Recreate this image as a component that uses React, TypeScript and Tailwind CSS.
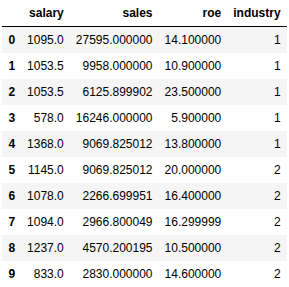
import React from 'react';

const columns = ['salary', 'sales', 'roe', 'industry'];

const rows: [string, string, string, string][] = [
  ['1095.0', '27595.000000', '14.100000', '1'],
  ['1053.5', '9958.000000', '10.900000', '1'],
  ['1053.5', '6125.899902', '23.500000', '1'],
  ['578.0', '16246.000000', '5.900000', '1'],
  ['1368.0', '9069.825012', '13.800000', '1'],
  ['1145.0', '9069.825012', '20.000000', '2'],
  ['1078.0', '2266.699951', '16.400000', '2'],
  ['1094.0', '2966.800049', '16.299999', '2'],
  ['1237.0', '4570.200195', '10.500000', '2'],
  ['833.0', '2830.000000', '14.600000', '2'],
];

export default function App() {
  return (
    <div className="min-h-screen w-full bg-white font-['Liberation_Sans',Arial,sans-serif] text-black">
      {/* DataFrame output */}
      <table className="mx-auto border-collapse text-[12px] leading-[14px]">
        <thead className="border-b border-black">
          <tr>
            <th className="px-[6px] py-[6px] text-right font-bold"></th>
            {columns.map((c) => (
              <th key={c} className="px-[6px] py-[6px] text-right font-bold whitespace-nowrap">
                {c}
              </th>
            ))}
          </tr>
        </thead>
        <tbody>
          {rows.map((r, i) => (
            <tr key={i} className="odd:bg-[#f5f5f5]">
              <th className="px-[6px] py-[6px] text-right font-bold">{i}</th>
              {r.map((v, j) => (
                <td key={j} className="px-[6px] py-[6px] text-right whitespace-nowrap">
                  {v}
                </td>
              ))}
            </tr>
          ))}
        </tbody>
      </table>
    </div>
  );
}
